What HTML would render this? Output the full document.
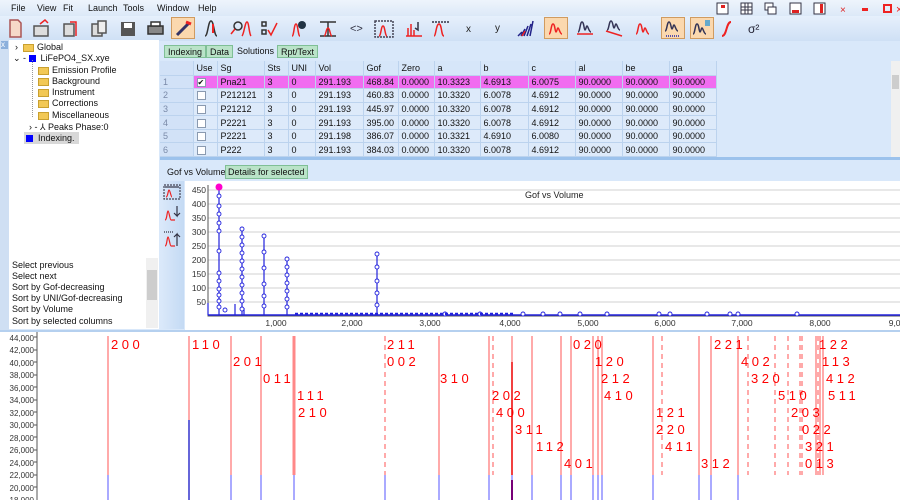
<!DOCTYPE html>
<html><head><meta charset="utf-8"><style>
*{box-sizing:border-box;margin:0;padding:0}
body{width:900px;height:500px;overflow:hidden;background:#d9e8fa;font-family:"Liberation Sans",sans-serif;font-size:9px;color:#111;position:relative}
.a{position:absolute}
.menu span{position:absolute;top:3px;font-size:9px}
.tb{position:absolute;top:17px;width:24px;height:22px}
.pr{background:#fbd8ae;border:1px solid #d09b60}
.tab{position:absolute;top:45px;height:13px;padding:1px 3px;font-size:9px}
.tg{background:#b9e3c8;border:1px solid #7fbf96}
table{border-collapse:collapse;position:absolute;left:160px;top:61px;font-size:9px}
td{height:13.6px;border-right:1px solid #bcd3ee;border-bottom:1px solid #bcd3ee;padding-left:3px;background:#ddeafa}
tr.h td{background:#d6e6f9;height:14px}
tr.s td{background:#f16cf0}
td.n{color:#7a8aa8;background:#d2e2f7!important}
.cb{display:inline-block;width:9px;height:9px;border:1px solid #8a9ab0;background:#fff;vertical-align:middle}
.tree div{position:absolute;font-size:9px}
.fold{display:inline-block;width:11px;height:8px;background:#f2c855;border:1px solid #c9a030;vertical-align:middle;margin-right:3px}
.list div{position:absolute;left:12px;font-size:9px}
</style></head><body>
<div class="a" style="left:0;top:0;width:900px;height:16px;background:linear-gradient(#eef4fc,#dce9f8)"></div>
<div class="menu"><span style="left:11px">File</span><span style="left:37px">View</span><span style="left:63px">Fit</span><span style="left:88px">Launch</span><span style="left:123px">Tools</span><span style="left:157px">Window</span><span style="left:198px">Help</span></div>
<svg class="a" style="left:715px;top:2px" width="185" height="14">
<rect x="2" y="1" width="11" height="11" fill="#fff" stroke="#334"/><rect x="6" y="3" width="4" height="3" fill="#d22"/>
<rect x="26" y="1" width="11" height="11" fill="#fff" stroke="#334"/><path d="M26 5h11M26 8h11M30 1v11M33 1v11" stroke="#334"/>
<rect x="50" y="1" width="8" height="7" fill="#fff" stroke="#334"/><rect x="53" y="5" width="8" height="7" fill="#fff" stroke="#334"/>
<rect x="75" y="1" width="11" height="11" fill="#fff" stroke="#334"/><rect x="77" y="8" width="7" height="3" fill="#d22"/>
<rect x="99" y="1" width="11" height="11" fill="#fff" stroke="#334"/><rect x="105" y="2" width="3" height="9" fill="#d22"/>
<text x="125" y="11" fill="#d22" font-size="10">×</text><rect x="147" y="6" width="6" height="3" fill="#e22"/>
<rect x="169" y="3" width="7" height="7" fill="none" stroke="#e22" stroke-width="2"/>
<text x="181" y="11" fill="#e22" font-size="11">×</text></svg>
<div class="a" style="left:0;top:16px;width:900px;height:25px;background:linear-gradient(#e6f0fc,#cfe0f5)"></div>
<div class="tb pr" style="left:171px"></div><div class="tb pr" style="left:544px"></div><div class="tb pr" style="left:661px"></div><div class="tb pr" style="left:690px"></div>
<svg class="a" style="left:0;top:16px" width="900" height="25">
<g stroke-width="1.5" fill="none">
<path d="M10 4h8l3 3v14h-11z" fill="#f6d9c8" stroke="#a55"/>
<path d="M34 10h14v10h-14z" fill="#ddd" stroke="#555"/><path d="M40 8l5-4 3 3" stroke="#e22"/>
<path d="M64 8h10v12h-10z" fill="#ddd" stroke="#555"/><path d="M70 6h6v14" stroke="#e22"/>
<path d="M92 8h10v12h-10z" fill="#ddd" stroke="#555"/><path d="M98 5h8v12h-8z" fill="#eee" stroke="#555"/>
<rect x="121" y="6" width="14" height="14" fill="#555"/><rect x="124" y="7" width="8" height="5" fill="#fff"/>
<rect x="148" y="10" width="15" height="8" fill="#888" stroke="#333"/><rect x="151" y="6" width="9" height="4" fill="#fff" stroke="#333"/>
<path d="M177 19l12-12" stroke="#336" stroke-width="3"/><path d="M186 6l5 2" stroke="#e22" stroke-width="3"/>
<path d="M205 20c3 0 3-15 6-15s3 15 6 15" stroke="#333"/><path d="M213 8v9" stroke="#e22" stroke-width="2"/>
<circle cx="238" cy="10" r="4" stroke="#333"/><path d="M235 13l-4 5M242 20c2-2 3-14 5-14s2 12 4 14" stroke="#e22"/>
<path d="M262 6h4v4h-4zM262 14h4v4h-4z" stroke="#333"/><path d="M268 14l3 5 6-12" stroke="#e22"/>
<path d="M292 20c2 0 2-12 4-12s2 12 4 12" stroke="#e22"/><circle cx="302" cy="9" r="4" fill="#234"/>
<path d="M320 6h16M328 6v14M320 20h16" stroke="#333"/><path d="M324 20c2 0 2-8 4-8s2 8 4 8" stroke="#e22"/>
<text x="350" y="16" fill="#334" font-size="11" stroke="none">&lt;&gt;</text>
<path d="M375 5h18v16h-18z" stroke="#445" stroke-dasharray="2 1"/><path d="M379 20c2 0 2-10 4-10s2 10 4 10" stroke="#e22"/>
<path d="M406 20h16M408 20v-8M411 20v-12M414 20v-6" stroke="#e22"/><path d="M418 6v8l-3-2" stroke="#334"/>
<path d="M432 6h18" stroke="#334" stroke-dasharray="2 1"/><path d="M434 20c2 0 2-12 5-12s2 12 5 12" stroke="#e22"/>
<text x="466" y="16" fill="#222" font-size="10" stroke="none">x</text><text x="495" y="15" fill="#222" font-size="10" stroke="none">y</text>
<path d="M518 20l4-4M521 20l4-7M524 20l4-10M527 20l4-12M530 20l3-15" stroke="#228"/><path d="M522 20l3-5" stroke="#e22"/>
<path d="M549 18c2 0 2-10 4-10s2 8 3 8 1-4 2-4 2 6 4 6" stroke="#e22"/>
<path d="M578 16c2 0 2-10 4-10s2 8 3 8 1-4 2-4 2 6 4 6" stroke="#335"/><path d="M577 18h16" stroke="#e22"/>
<path d="M607 14c2 0 2-9 4-9s2 7 3 7 1-4 2-4 2 6 4 6" stroke="#335"/><path d="M606 15l16 5" stroke="#e22"/>
<path d="M636 18c2 0 2-10 4-10s2 8 3 8 1-4 2-4 2 6 4 6" stroke="#e22"/>
<path d="M665 15c2 0 2-9 4-9s2 7 3 7 1-4 2-4 2 6 4 6" stroke="#335"/><path d="M666 20h14" stroke="#22a" stroke-dasharray="1 1"/>
<path d="M693 18c2 0 2-10 4-10s2 8 3 8 1-4 2-4 2 6 4 6" stroke="#335"/><rect x="705" y="4" width="5" height="6" fill="#6ac" stroke="none"/>
<path d="M722 20c5 0 4-14 9-14" stroke="#e22" stroke-width="2"/>
<text x="748" y="17" fill="#223" font-size="12" stroke="none">σ²</text>
</g></svg>
<div class="a" style="left:0;top:40px;width:9px;height:460px;background:#cfdff3"></div>
<div class="a" style="left:1px;top:41px;color:#fff;background:#8cb0dc;font-size:8px;width:7px;height:8px;line-height:8px">x</div>
<div class="a" style="left:9px;top:40px;width:150px;height:218px;background:#fff"></div>
<div class="tree">
<div style="left:15px;top:42px">›&nbsp; <span class="fold"></span>Global</div>
<div style="left:13px;top:53px">⌄ - <span style="display:inline-block;width:7px;height:7px;background:#00f;vertical-align:middle"></span>&nbsp; LiFePO4_SX.xye</div>
<div style="left:38px;top:65px"><span class="fold"></span>Emission Profile</div>
<div style="left:38px;top:76px"><span class="fold"></span>Background</div>
<div style="left:38px;top:87px"><span class="fold"></span>Instrument</div>
<div style="left:38px;top:98px"><span class="fold"></span>Corrections</div>
<div style="left:38px;top:110px"><span class="fold"></span>Miscellaneous</div>
<div style="left:29px;top:122px">› - ⅄ Peaks Phase:0</div>
<div style="left:24px;top:132px;background:#d8d8d8;padding:1px 4px 1px 2px"><span style="display:inline-block;width:7px;height:7px;background:#00f;vertical-align:middle"></span>&nbsp; Indexing.</div>
</div>
<div class="a" style="left:32px;top:60px;width:1px;height:57px;border-left:1px dotted #999"></div>
<div class="a" style="left:9px;top:257px;width:150px;height:72px;background:#fff"></div>
<div class="list">
<div style="top:260px">Select previous</div><div style="top:271px">Select next</div><div style="top:282px">Sort by Gof-decreasing</div><div style="top:293px">Sort by UNI/Gof-decreasing</div><div style="top:304px">Sort by Volume</div><div style="top:316px">Sort by selected columns</div>
</div>
<div class="a" style="left:146px;top:258px;width:12px;height:70px;background:#f0f0f0"></div>
<div class="a" style="left:147px;top:270px;width:10px;height:30px;background:#cdcdcd"></div>
<div class="tab tg" style="left:164px">Indexing</div><div class="tab tg" style="left:206px">Data</div><div class="tab" style="left:234px">Solutions</div><div class="tab tg" style="left:277px">Rpt/Text</div>
<table>
<tr class="h"><td class="n" style="width:33px"></td><td style="width:24px">Use</td><td style="width:47px">Sg</td><td style="width:24px">Sts</td><td style="width:27px">UNI</td><td style="width:48px">Vol</td><td style="width:35px">Gof</td><td style="width:36px">Zero</td><td style="width:46px">a</td><td style="width:48px">b</td><td style="width:47px">c</td><td style="width:47px">al</td><td style="width:47px">be</td><td style="width:47px">ga</td></tr>
<tr class="s"><td class="n">1</td><td><span class="cb" style="font-size:8px;line-height:7px">✔</span></td><td>Pna21</td><td>3</td><td>0</td><td>291.193</td><td>468.84</td><td>0.0000</td><td>10.3323</td><td>4.6913</td><td>6.0075</td><td>90.0000</td><td>90.0000</td><td>90.0000</td></tr>
<tr><td class="n">2</td><td><span class="cb"></span></td><td>P212121</td><td>3</td><td>0</td><td>291.193</td><td>460.83</td><td>0.0000</td><td>10.3320</td><td>6.0078</td><td>4.6912</td><td>90.0000</td><td>90.0000</td><td>90.0000</td></tr>
<tr><td class="n">3</td><td><span class="cb"></span></td><td>P21212</td><td>3</td><td>0</td><td>291.193</td><td>445.97</td><td>0.0000</td><td>10.3320</td><td>6.0078</td><td>4.6912</td><td>90.0000</td><td>90.0000</td><td>90.0000</td></tr>
<tr><td class="n">4</td><td><span class="cb"></span></td><td>P2221</td><td>3</td><td>0</td><td>291.193</td><td>395.00</td><td>0.0000</td><td>10.3320</td><td>6.0078</td><td>4.6912</td><td>90.0000</td><td>90.0000</td><td>90.0000</td></tr>
<tr><td class="n">5</td><td><span class="cb"></span></td><td>P2221</td><td>3</td><td>0</td><td>291.198</td><td>386.07</td><td>0.0000</td><td>10.3321</td><td>4.6910</td><td>6.0080</td><td>90.0000</td><td>90.0000</td><td>90.0000</td></tr>
<tr><td class="n">6</td><td><span class="cb"></span></td><td>P222</td><td>3</td><td>0</td><td>291.193</td><td>384.03</td><td>0.0000</td><td>10.3320</td><td>6.0078</td><td>4.6912</td><td>90.0000</td><td>90.0000</td><td>90.0000</td></tr>
</table>
<div class="a" style="left:891px;top:61px;width:9px;height:96px;background:#f0f0f0"></div>
<div class="a" style="left:892px;top:75px;width:7px;height:14px;background:#cdcdcd"></div>
<div class="a" style="left:160px;top:157px;width:740px;height:3px;background:#9cc2ec"></div>
<div class="a" style="left:167px;top:167px;font-size:9px">Gof vs Volume</div>
<div class="a tg" style="left:225px;top:165px;padding:1px 2px;font-size:9px">Details for selected</div>
<div class="a" style="left:160px;top:181px;width:24px;height:148px;background:linear-gradient(90deg,#dbe9fa,#c4daf4)"></div>
<svg class="a" style="left:163px;top:184px" width="20" height="70" fill="none" stroke-width="1.2">
<rect x="1" y="1" width="16" height="14" stroke="#445" stroke-dasharray="2 1"/><path d="M3 13c2 0 2-7 3-7s2 7 3 7" stroke="#e22"/><path d="M2 3h14" stroke="#334"/>
<path d="M2 36c2 0 2-9 3-9s2 9 3 9h4" stroke="#e22"/><path d="M14 22v10l-3-3M14 32l3-3" stroke="#334"/>
<path d="M2 62c2 0 2-9 3-9s2 9 3 9h4" stroke="#e22"/><path d="M14 62v-12l-3 3M14 50l3 3" stroke="#334"/><path d="M1 48h10" stroke="#334" stroke-dasharray="1 1"/>
</svg>
<svg class="a" style="left:185px;top:181px" width="715" height="150" font-family="Liberation Sans" font-size="8.5">
<rect width="715" height="150" fill="#fff"/>
<g stroke="#d0d0d0"><path d="M23 9H715M23 23H715M23 37H715M23 51H715M23 65H715M23 79H715M23 93H715M23 107H715M23 121H715"/></g>
<g fill="#333" text-anchor="end"><text x="21" y="12">450</text><text x="21" y="26">400</text><text x="21" y="40">350</text><text x="21" y="54">300</text><text x="21" y="68">250</text><text x="21" y="82">200</text><text x="21" y="96">150</text><text x="21" y="110">100</text><text x="21" y="124">50</text></g>
<path d="M23 4V135H715" stroke="#555" fill="none"/>
<text x="340" y="17" fill="#222" font-size="9">Gof vs Volume</text>
<g fill="#333" text-anchor="middle"><text x="91" y="145">1,000</text><text x="167" y="145">2,000</text><text x="245" y="145">3,000</text><text x="325" y="145">4,000</text><text x="403" y="145">5,000</text><text x="480" y="145">6,000</text><text x="557" y="145">7,000</text><text x="635" y="145">8,000</text><text x="712" y="145">9,00</text></g>
<g stroke="#22d" stroke-width="1.2" fill="none">
<path d="M34 134V7M57 134V48M79 134V54M102 134V77M192 134V73"/>
<path d="M23 134H715" stroke-width="1.5"/>
<path d="M23 134V122"/><path d="M50 134V123M59 134V127"/>
</g>
<g stroke="#22d" fill="#fff" stroke-width="0.9">
<circle cx="34" cy="15" r="2"/><circle cx="34" cy="25" r="2"/><circle cx="34" cy="33" r="2"/><circle cx="34" cy="42" r="2"/><circle cx="34" cy="50" r="2"/><circle cx="34" cy="70" r="2"/><circle cx="34" cy="92" r="2"/><circle cx="34" cy="100" r="2"/><circle cx="34" cy="108" r="2"/><circle cx="34" cy="114" r="2"/><circle cx="34" cy="120" r="2"/><circle cx="34" cy="126" r="2"/>
<circle cx="57" cy="48" r="2"/><circle cx="57" cy="56" r="2"/><circle cx="57" cy="64" r="2"/><circle cx="57" cy="72" r="2"/><circle cx="57" cy="80" r="2"/><circle cx="57" cy="88" r="2"/><circle cx="57" cy="96" r="2"/><circle cx="57" cy="104" r="2"/><circle cx="57" cy="112" r="2"/><circle cx="57" cy="120" r="2"/><circle cx="57" cy="128" r="2"/>
<circle cx="79" cy="55" r="2"/><circle cx="79" cy="71" r="2"/><circle cx="79" cy="87" r="2"/><circle cx="79" cy="103" r="2"/><circle cx="79" cy="115" r="2"/><circle cx="79" cy="125" r="2"/>
<circle cx="102" cy="78" r="2"/><circle cx="102" cy="86" r="2"/><circle cx="102" cy="94" r="2"/><circle cx="102" cy="102" r="2"/><circle cx="102" cy="110" r="2"/><circle cx="102" cy="118" r="2"/><circle cx="102" cy="126" r="2"/>
<circle cx="192" cy="73" r="2"/><circle cx="192" cy="86" r="2"/><circle cx="192" cy="100" r="2"/><circle cx="192" cy="112" r="2"/><circle cx="192" cy="124" r="2"/>
<circle cx="40" cy="129" r="2"/><circle cx="260" cy="133" r="2"/><circle cx="295" cy="133" r="2"/><circle cx="338" cy="133" r="2"/><circle cx="358" cy="133" r="2"/><circle cx="375" cy="133" r="2"/><circle cx="395" cy="133" r="2"/><circle cx="422" cy="133" r="2"/><circle cx="474" cy="133" r="2"/><circle cx="485" cy="133" r="2"/><circle cx="522" cy="133" r="2"/><circle cx="545" cy="133" r="2"/><circle cx="553" cy="133" r="2"/><circle cx="612" cy="133" r="2"/>
</g>
<path d="M110 133H330" stroke="#22d" stroke-width="2.5" stroke-dasharray="3 2"/>
<circle cx="34" cy="6" r="3.5" fill="#f0c"/>
</svg>
<div class="a" style="left:0;top:330px;width:900px;height:2px;background:#b5d0ef"></div>
<svg class="a" style="left:0;top:332px" width="900" height="168" font-family="Liberation Sans">
<rect width="900" height="168" fill="#fff"/>
<g font-size="8" fill="#333" text-anchor="end"><text x="34" y="9">44,000</text><text x="34" y="21">42,000</text><text x="34" y="34">40,000</text><text x="34" y="46">38,000</text><text x="34" y="59">36,000</text><text x="34" y="71">34,000</text><text x="34" y="84">32,000</text><text x="34" y="96">30,000</text><text x="34" y="109">28,000</text><text x="34" y="121">26,000</text><text x="34" y="134">24,000</text><text x="34" y="146">22,000</text><text x="34" y="159">20,000</text><text x="34" y="171">18,000</text></g>
<path d="M37 0V168M34 5h3M34 18h3M34 30h3M34 43h3M34 55h3M34 68h3M34 80h3M34 93h3M34 105h3M34 118h3M34 130h3M34 143h3M34 155h3" stroke="#555"/>
<g stroke="#f55" stroke-width="1">
<path d="M108 4V143M189 4V143M231 4V143M261 4V143M294 4V143M439 4V143M489 4V143M512 4V143M532 4V143M561 4V143M571 4V143M593 4V143M598 4V143M602 4V143M653 4V143M699 4V143M711 4V143M738 4V143M816 4V143M820 4V143M823 4V143"/>
<path d="M385 4V143M493 4V143M662 4V143M748 4V143M775 4V143M788 4V143M800 4V143M802 4V143M818 4V143" stroke-dasharray="5 4"/>
<path d="M294 4V143" stroke-width="3" stroke="#f88"/><path d="M512 30V143" stroke-width="1.5" stroke="#e00"/>
</g>
<g stroke="#55f"><path d="M108 143V168M189 143V168M231 143V168M261 143V168M294 143V168M385 143V168M439 143V168M489 143V168M512 143V168M532 143V168M561 143V168M571 143V168M593 143V168M598 143V168M602 143V168M653 143V168M699 143V168M711 143V168M738 143V168"/></g>
<path d="M189 88V168" stroke="#33c" stroke-width="1.5"/><path d="M512 148V168" stroke="#707" stroke-width="2"/>
<g font-size="13" fill="#f00" letter-spacing="3.5">
<text x="111" y="17">200</text><text x="192" y="17">110</text><text x="233" y="34">201</text><text x="263" y="51">011</text><text x="297" y="68">111</text><text x="298" y="85">210</text>
<text x="387" y="17">211</text><text x="387" y="34">002</text><text x="440" y="51">310</text><text x="492" y="68">202</text><text x="496" y="85">400</text><text x="515" y="102">311</text><text x="536" y="119">112</text><text x="564" y="136">401</text>
<text x="573" y="17">020</text><text x="595" y="34">120</text><text x="601" y="51">212</text><text x="604" y="68">410</text><text x="656" y="85">121</text><text x="656" y="102">220</text><text x="665" y="119">411</text><text x="701" y="136">312</text>
<text x="714" y="17">221</text><text x="741" y="34">402</text><text x="751" y="51">320</text><text x="778" y="68">510</text><text x="791" y="85">203</text><text x="802" y="102">022</text><text x="805" y="119">321</text><text x="805" y="136">013</text>
<text x="819" y="17">122</text><text x="822" y="34">113</text><text x="826" y="51">412</text><text x="828" y="68">511</text>
</g>
</svg>
</body></html>
